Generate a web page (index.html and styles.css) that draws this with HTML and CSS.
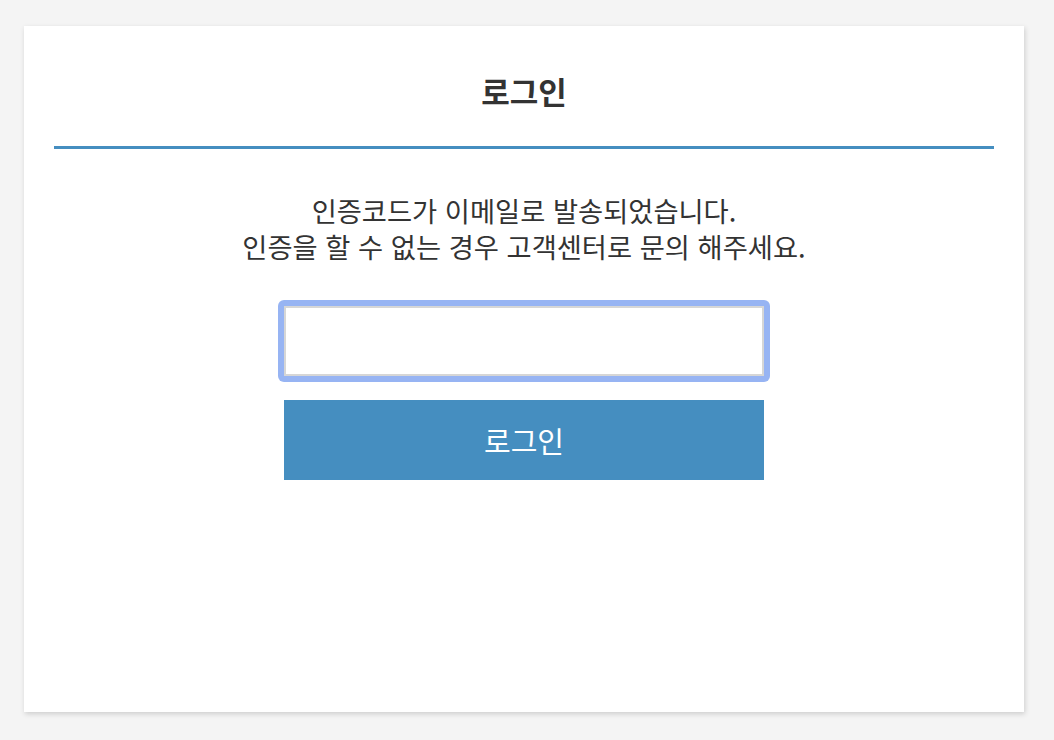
FILE: index.html
```html
<!DOCTYPE html>
<html lang="ko">
<head>
  <meta charset="UTF-8" />
  <title>로그인 - 인증코드</title>
  <meta name="viewport" content="width=device-width, initial-scale=1.0"/>
  <link rel="stylesheet" href="styles.css">
</head>
<body>

  <div class="login-card">
    <h2 class="login-title">로그인</h2>

    <p class="notice">
      인증코드가 이메일로 발송되었습니다.<br>
      인증을 할 수 없는 경우 고객센터로 문의 해주세요.
    </p>

    <form class="code-form" onsubmit="return false;">
      <div class="focus-ring">
        <input type="text" id="authCode" class="code-input" autocomplete="off">
      </div>
      <button type="submit" class="login-btn">로그인</button>
    </form>
  </div>

</body>
</html>
```

FILE: styles.css
```css
body {
  margin: 0;
  padding: 26px 30px 28px 24px;
  background-color: #f4f4f4;
  font-family: "Noto Sans CJK KR", "Noto Sans", sans-serif;
  color: #333;
}

.login-card {
  width: 940px;
  height: 626px;
  padding: 0 30px 60px;
  background-color: #fff;
  box-shadow: 1px 2px 5px rgba(0, 0, 0, 0.16);
}

.login-title {
  margin: 0;
  padding: 46px 0 36px;
  font-size: 31px;
  line-height: 38px;
  font-weight: bold;
  text-align: center;
  color: #333;
  border-bottom: 3px solid #458ec0;
}

.notice {
  margin: 43px 0 36px;
  font-size: 27.3px;
  line-height: 36px;
  text-align: center;
  color: #333;
}

.code-form {
  display: flex;
  flex-direction: column;
  align-items: center;
  gap: 18px;
}

.focus-ring {
  padding: 6px;
  border-radius: 6px;
  background-color: #97b4f3;
}

.code-input {
  display: block;
  width: 480px;
  height: 70px;
  box-sizing: border-box;
  margin: 0;
  padding: 0 14px;
  border: 2px solid #d6d6d6;
  background-color: #fff;
  font-size: 22px;
  font-family: inherit;
  outline: none;
}

.login-btn {
  width: 480px;
  height: 80px;
  border: none;
  background-color: #458ec0;
  color: #fff;
  font-family: inherit;
  font-size: 29px;
  cursor: pointer;
}
```
